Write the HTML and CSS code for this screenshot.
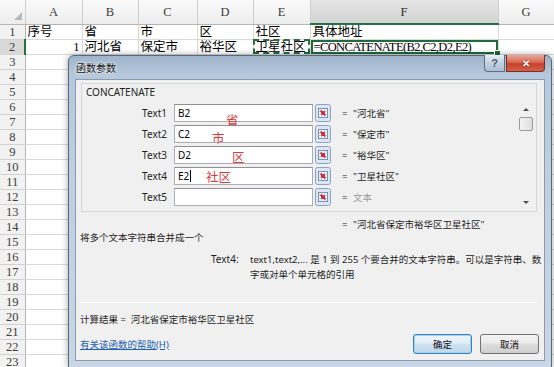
FILE: index.html
```html
<!DOCTYPE html>
<html lang="zh-CN">
<head>
<meta charset="utf-8">
<title>函数参数</title>
<link rel="stylesheet" href="styles.css">
</head>
<body>
<div class="sheet">
  <table class="grid">
    <colgroup>
      <col class="w-rh"><col class="w-a"><col class="w-b"><col class="w-c"><col class="w-d"><col class="w-e"><col class="w-f"><col class="w-g">
    </colgroup>
    <thead>
      <tr>
        <th class="corner"><svg class="corner-tri" width="8" height="8" viewBox="0 0 8 8"><polygon points="8,0 8,8 0,8" fill="#b9b9b9"/></svg></th>
        <th>A</th><th>B</th><th>C</th><th>D</th><th>E</th><th class="sel-col">F</th><th>G</th>
      </tr>
    </thead>
    <tbody>
      <tr><th>1</th><td>序号</td><td>省</td><td>市</td><td>区</td><td>社区</td><td>具体地址</td><td></td></tr>
      <tr><th class="sel-row">2</th><td class="num">1</td><td>河北省</td><td>保定市</td><td>裕华区</td><td class="copy">卫星社区</td><td class="active"><span class="formula">=CONCATENATE(B2,C2,D2,E2)</span></td><td></td></tr>
      <tr><th>3</th><td></td><td></td><td></td><td></td><td></td><td></td><td></td></tr>
      <tr><th>4</th><td></td><td></td><td></td><td></td><td></td><td></td><td></td></tr>
      <tr><th>5</th><td></td><td></td><td></td><td></td><td></td><td></td><td></td></tr>
      <tr><th>6</th><td></td><td></td><td></td><td></td><td></td><td></td><td></td></tr>
      <tr><th>7</th><td></td><td></td><td></td><td></td><td></td><td></td><td></td></tr>
      <tr><th>8</th><td></td><td></td><td></td><td></td><td></td><td></td><td></td></tr>
      <tr><th>9</th><td></td><td></td><td></td><td></td><td></td><td></td><td></td></tr>
      <tr><th>10</th><td></td><td></td><td></td><td></td><td></td><td></td><td></td></tr>
      <tr><th>11</th><td></td><td></td><td></td><td></td><td></td><td></td><td></td></tr>
      <tr><th>12</th><td></td><td></td><td></td><td></td><td></td><td></td><td></td></tr>
      <tr><th>13</th><td></td><td></td><td></td><td></td><td></td><td></td><td></td></tr>
      <tr><th>14</th><td></td><td></td><td></td><td></td><td></td><td></td><td></td></tr>
      <tr><th>15</th><td></td><td></td><td></td><td></td><td></td><td></td><td></td></tr>
      <tr><th>16</th><td></td><td></td><td></td><td></td><td></td><td></td><td></td></tr>
      <tr><th>17</th><td></td><td></td><td></td><td></td><td></td><td></td><td></td></tr>
      <tr><th>18</th><td></td><td></td><td></td><td></td><td></td><td></td><td></td></tr>
      <tr><th>19</th><td></td><td></td><td></td><td></td><td></td><td></td><td></td></tr>
      <tr><th>20</th><td></td><td></td><td></td><td></td><td></td><td></td><td></td></tr>
      <tr><th>21</th><td></td><td></td><td></td><td></td><td></td><td></td><td></td></tr>
      <tr><th>22</th><td></td><td></td><td></td><td></td><td></td><td></td><td></td></tr>
      <tr><th>23</th><td></td><td></td><td></td><td></td><td></td><td></td><td></td></tr>
    </tbody>
  </table>
</div>

<div class="dialog">
  <div class="titlebar">
    <span class="title">函数参数</span>
    <div class="caption-btns">
      <span class="cap cap-help">?</span>
      <span class="cap cap-close">✕</span>
    </div>
  </div>
  <div class="client">
    <div class="argbox">
      <div class="argmain">
        <div class="fname">CONCATENATE</div>
        <div class="args">
          <div class="arg">
            <span class="lbl">Text1</span>
            <span class="field">B2</span>
            <svg class="ref" width="16" height="18" viewBox="0 0 16 18"><rect x="0.5" y="0.5" width="15" height="17" rx="2" fill="#dbe6f2" stroke="#8aa3c2"/><rect x="3.5" y="4.5" width="9" height="9" fill="#fff" stroke="#6f8db5"/><path d="M3.5 7.5h9M3.5 10.5h9M6.5 4.5v9M9.5 4.5v9" stroke="#b3c5db"/><path d="M5.5 6.5l5 5" stroke="#d3263a" stroke-width="1.6"/><circle cx="8" cy="9" r="2.2" fill="#d8283c"/></svg>
            <span class="eq">=</span>
            <span class="val">"河北省"</span>
          </div>
          <div class="arg">
            <span class="lbl">Text2</span>
            <span class="field">C2</span>
            <svg class="ref" width="16" height="18" viewBox="0 0 16 18"><rect x="0.5" y="0.5" width="15" height="17" rx="2" fill="#dbe6f2" stroke="#8aa3c2"/><rect x="3.5" y="4.5" width="9" height="9" fill="#fff" stroke="#6f8db5"/><path d="M3.5 7.5h9M3.5 10.5h9M6.5 4.5v9M9.5 4.5v9" stroke="#b3c5db"/><path d="M5.5 6.5l5 5" stroke="#d3263a" stroke-width="1.6"/><circle cx="8" cy="9" r="2.2" fill="#d8283c"/></svg>
            <span class="eq">=</span>
            <span class="val">"保定市"</span>
          </div>
          <div class="arg">
            <span class="lbl">Text3</span>
            <span class="field">D2</span>
            <svg class="ref" width="16" height="18" viewBox="0 0 16 18"><rect x="0.5" y="0.5" width="15" height="17" rx="2" fill="#dbe6f2" stroke="#8aa3c2"/><rect x="3.5" y="4.5" width="9" height="9" fill="#fff" stroke="#6f8db5"/><path d="M3.5 7.5h9M3.5 10.5h9M6.5 4.5v9M9.5 4.5v9" stroke="#b3c5db"/><path d="M5.5 6.5l5 5" stroke="#d3263a" stroke-width="1.6"/><circle cx="8" cy="9" r="2.2" fill="#d8283c"/></svg>
            <span class="eq">=</span>
            <span class="val">"裕华区"</span>
          </div>
          <div class="arg">
            <span class="lbl">Text4</span>
            <span class="field">E2<span class="caret"></span></span>
            <svg class="ref" width="16" height="18" viewBox="0 0 16 18"><rect x="0.5" y="0.5" width="15" height="17" rx="2" fill="#dbe6f2" stroke="#8aa3c2"/><rect x="3.5" y="4.5" width="9" height="9" fill="#fff" stroke="#6f8db5"/><path d="M3.5 7.5h9M3.5 10.5h9M6.5 4.5v9M9.5 4.5v9" stroke="#b3c5db"/><path d="M5.5 6.5l5 5" stroke="#d3263a" stroke-width="1.6"/><circle cx="8" cy="9" r="2.2" fill="#d8283c"/></svg>
            <span class="eq">=</span>
            <span class="val">"卫星社区"</span>
          </div>
          <div class="arg">
            <span class="lbl">Text5</span>
            <span class="field"></span>
            <svg class="ref" width="16" height="18" viewBox="0 0 16 18"><rect x="0.5" y="0.5" width="15" height="17" rx="2" fill="#dbe6f2" stroke="#8aa3c2"/><rect x="3.5" y="4.5" width="9" height="9" fill="#fff" stroke="#6f8db5"/><path d="M3.5 7.5h9M3.5 10.5h9M6.5 4.5v9M9.5 4.5v9" stroke="#b3c5db"/><path d="M5.5 6.5l5 5" stroke="#d3263a" stroke-width="1.6"/><circle cx="8" cy="9" r="2.2" fill="#d8283c"/></svg>
            <span class="eq">=</span>
            <span class="val muted">文本</span>
          </div>
        </div>
      </div>
      <div class="vscroll">
        <span class="sb-btn"><span class="arrow-up"></span></span>
        <span class="sb-thumb"></span>
        <span class="sb-track"></span>
        <span class="sb-btn"><span class="arrow-down"></span></span>
      </div>
    </div>

    <div class="result-line"><span class="eq">=</span><span class="val">"河北省保定市裕华区卫星社区"</span></div>
    <p class="desc">将多个文本字符串合并成一个</p>
    <div class="argdesc">
      <span class="argname">Text4:</span>
      <span class="argtext">text1,text2,... 是 1 到 255 个要合并的文本字符串。可以是字符串、数<br>字或对单个单元格的引用</span>
    </div>
    <div class="sep"></div>
    <div class="calc">计算结果 = &nbsp;河北省保定市裕华区卫星社区</div>
    <div class="footer">
      <a class="help-link">有关该函数的帮助(H)</a>
      <div class="btns">
        <span class="btn btn-default">确定</span>
        <span class="btn">取消</span>
      </div>
    </div>

    <span class="note n1">省</span>
    <span class="note n2">市</span>
    <span class="note n3">区</span>
    <span class="note n4">社区</span>
  </div>
</div>
</body>
</html>
```

FILE: styles.css
```css
* { box-sizing: border-box; }
html, body { margin: 0; padding: 0; }
body {
  width: 554px;
  height: 367px;
  overflow: hidden;
  position: relative;
  background: #fff;
  font-family: "Liberation Serif", "Noto Sans CJK SC", serif;
}

/* ---------- spreadsheet ---------- */
.grid {
  border-collapse: collapse;
  table-layout: fixed;
  width: 554px;
  font-size: 12.5px;
  color: #000;
}
.w-rh { width: 25px; }
.w-a { width: 57px; }
.w-b { width: 56px; }
.w-c { width: 59px; }
.w-d { width: 56px; }
.w-e { width: 57px; }
.w-f { width: 188px; }
.w-g { width: 56px; }

.grid tr { height: 15px; }
.grid thead tr { height: 24px; }

.grid th, .grid td {
  padding: 0 2px;
  border-right: 1px solid #d9d9d9;
  border-bottom: 1px solid #d9d9d9;
  white-space: nowrap;
  overflow: hidden;
  line-height: 13px;
  vertical-align: bottom;
  text-align: left;
  font-weight: normal;
}
.grid thead th {
  background: linear-gradient(#fafafa, #ededed);
  text-align: center;
  vertical-align: middle;
  color: #3c3c3c;
  border-right: 1px solid #cfcfcf;
  border-bottom: 1px solid #b5b5b5;
  padding-top: 2px;
}
.grid thead th.corner {
  text-align: right;
  vertical-align: bottom;
  padding: 0 3px 4px 0;
  line-height: 0;
}
.corner-tri { display: inline-block; }
.grid thead th.sel-col {
  background: linear-gradient(#e4e4e4, #d3d3d3);
  border-bottom: 2px solid #217346;
  color: #2a2a2a;
}
.grid tbody th {
  background: #f2f2f2;
  text-align: center;
  color: #3c3c3c;
  border-right: 1px solid #b5b5b5;
  border-bottom: 1px solid #d3d3d3;
  padding: 0;
}
.grid tbody th.sel-row {
  background: #d9d9d9;
  border-right: 2px solid #217346;
}
.grid td.num { text-align: right; }
.grid td.copy {
  outline: 2px dashed #2d6a3c;
  outline-offset: -2px;
}
.grid td.active {
  position: relative;
  overflow: visible;
  box-shadow: inset 0 0 0 2px #1f6b3a;
  padding-left: 3px;
}
.grid td.active::after {
  content: "";
  position: absolute;
  right: -3px;
  bottom: -3px;
  width: 5px;
  height: 5px;
  background: #1f6b3a;
  border: 1px solid #fff;
}
.formula { letter-spacing: -0.6px; }

/* ---------- dialog ---------- */
.dialog {
  position: absolute;
  left: 68px;
  top: 55px;
  width: 484px;
  height: 313px;
  border: 1px solid #56687e;
  border-radius: 6px 6px 0 0;
  background: linear-gradient(180deg, #9fb4cb 0%, #b6c8db 6%, #bfcfe0 40%, #c8d6e5 100%);
  box-shadow: 0 0 7px rgba(0, 0, 0, 0.35);
  padding: 0 6px 6px 6px;
  display: flex;
  flex-direction: column;
  font-family: "Noto Sans", "Noto Sans CJK SC", sans-serif;
  font-size: 9.5px;
  color: #1e1e1e;
}
.titlebar {
  height: 23px;
  position: relative;
  display: flex;
  align-items: center;
  flex: none;
}
.title {
  padding-left: 1px;
  font-size: 10px;
  color: #111;
  text-shadow: 0 0 4px #fff, 0 0 2px #fff;
}
.caption-btns {
  position: absolute;
  top: -1px;
  right: 0;
  display: flex;
  gap: 1px;
}
.cap {
  display: flex;
  align-items: center;
  justify-content: center;
  height: 17px;
  border: 1px solid #5d6f86;
  border-top: none;
  font-family: "Liberation Sans", sans-serif;
}
.cap-help {
  width: 21px;
  border-radius: 0 0 0 4px;
  background: linear-gradient(#e7eef6, #c3d1e0 50%, #aebfd2);
  color: #4a5a70;
  font-size: 11px;
  font-weight: bold;
}
.cap-close {
  width: 39px;
  border-radius: 0 0 4px 0;
  border-color: #7b2e24;
  background: linear-gradient(#eba698, #d86b55 45%, #c7402a 55%, #d2614b);
  color: #fff;
  font-size: 10px;
  font-weight: bold;
  text-shadow: 0 0 2px #7a2015;
}

.client {
  position: relative;
  flex: 1;
  background: #f0f0f0;
  border: 1px solid #8a9bb0;
  display: flex;
  flex-direction: column;
}

.argbox {
  margin: 3px 0 0 5px;
  width: 456px;
  height: 129px;
  border: 1px solid #d7d7d7;
  display: flex;
  flex: none;
}
.argmain { flex: 1; }
.fname {
  padding: 2px 0 0 4px;
  line-height: 13px;
  font-size: 10px;
  color: #1e1e1e;
}
.args {
  margin-top: 5px;
  display: flex;
  flex-direction: column;
  gap: 3px;
}
.arg {
  display: flex;
  align-items: center;
  height: 18px;
}
.lbl {
  width: 85px;
  margin-right: 7px;
  text-align: right;
  font-size: 10px;
}
.field {
  width: 139px;
  height: 18px;
  background: #fff;
  border: 1px solid #abadb3;
  border-top-color: #8e9097;
  padding: 0 3px;
  display: flex;
  align-items: center;
  font-size: 10px;
  color: #000;
}
.caret {
  display: inline-block;
  width: 1px;
  height: 12px;
  background: #000;
  margin-left: 1px;
}
.ref { margin-left: 2px; flex: none; }
.eq { margin-left: 11px; width: 6px; }
.val { margin-left: 5px; }
.val.muted { color: #9a9a9a; }

.vscroll {
  width: 15px;
  margin: 19px 3px 2px 0;
  display: flex;
  flex-direction: column;
  align-items: center;
}
.sb-btn {
  height: 13px;
  width: 15px;
  display: flex;
  align-items: center;
  justify-content: center;
}
.arrow-up {
  width: 0; height: 0;
  border-left: 3px solid transparent;
  border-right: 3px solid transparent;
  border-bottom: 3px solid #505050;
}
.arrow-down {
  width: 0; height: 0;
  border-left: 3px solid transparent;
  border-right: 3px solid transparent;
  border-top: 3px solid #505050;
}
.sb-thumb {
  width: 14px;
  height: 14px;
  margin-top: 1px;
  border: 1px solid #9a9a9a;
  border-radius: 2px;
  background: linear-gradient(90deg, #f4f4f4, #dedede);
}
.sb-track { flex: 1; }

.result-line {
  margin-top: 6px;
  padding-left: 266px;
  line-height: 13px;
  display: flex;
}
.result-line .eq { margin-left: 0; }

.desc {
  margin: 0;
  padding-left: 4px;
  line-height: 13px;
}
.argdesc {
  margin-top: 8px;
  padding-left: 135px;
  display: flex;
  line-height: 15px;
}
.argname { width: 39px; flex: none; font-size: 10px; }
.argtext { white-space: nowrap; }

.sep {
  margin: 20px 6px 0 4px;
  height: 1px;
  background: #d5d5d5;
  border-bottom: 1px solid #fbfbfb;
}
.calc {
  margin-top: 10px;
  padding-left: 4px;
  line-height: 13px;
}
.footer {
  margin-top: 8px;
  padding: 0 5px 0 4px;
  height: 20px;
  display: flex;
  align-items: center;
  justify-content: space-between;
}
.help-link {
  color: #1c5fb0;
  text-decoration: underline;
}
.btns { display: flex; gap: 8px; }
.btn {
  width: 59px;
  height: 20px;
  display: flex;
  align-items: center;
  justify-content: center;
  border: 1px solid #707070;
  border-radius: 3px;
  background: linear-gradient(#f3f3f3, #ebebeb 45%, #dddddd 50%, #cfcfcf);
  color: #111;
}
.btn-default {
  border-color: #3c7fb1;
  box-shadow: inset 0 0 0 1px #9fd4f3;
  background: linear-gradient(#eef5fa, #e2eef7 45%, #cfe3f1 50%, #bfd8ea);
}

.note {
  position: absolute;
  font-size: 12.5px;
  line-height: 12.5px;
  color: #e0393b;
  font-family: "Noto Sans CJK SC", sans-serif;
}
.n1 { left: 150px; top: 34px; }
.n2 { left: 136px; top: 52px; }
.n3 { left: 156px; top: 71px; }
.n4 { left: 130px; top: 91px; }
```
